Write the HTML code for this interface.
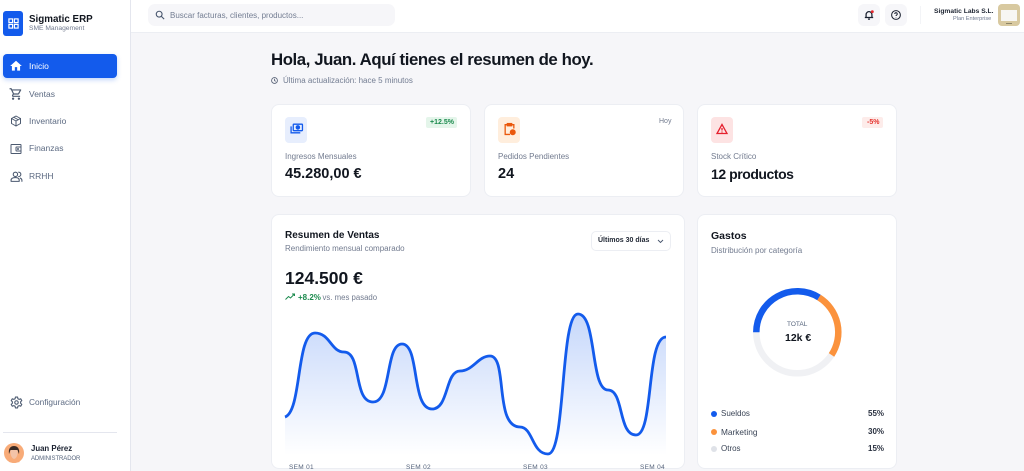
<!DOCTYPE html>
<html lang="es"><head><meta charset="utf-8"><title>Sigmatic ERP</title>
<style>
*{box-sizing:border-box;margin:0;padding:0}
html,body{width:1024px;height:471px;overflow:hidden;background:#f6f6f9;font-family:"Liberation Sans",sans-serif}
body{position:relative}
.t{position:absolute;white-space:nowrap;line-height:1}
.b{position:absolute}
.card{position:absolute;background:#fff;border:1px solid #eceef3;border-radius:8px}
svg{position:absolute;overflow:visible}
.ns{fill:none;stroke:#4c5a70;stroke-width:2;stroke-linecap:round;stroke-linejoin:round}
.nav{color:#5c6a82;font-size:8.5px}
.mut{color:#727b8f}
</style></head><body>
<!-- Sidebar -->
<div class="b" style="left:0;top:0;width:131px;height:471px;background:#fff;border-right:1px solid #e4e6ee"></div>
<div class="b" style="left:3px;top:11px;width:20px;height:25px;background:#135bec;border-radius:3px"></div>
<svg style="left:7.5px;top:18px" width="11" height="11" viewBox="0 0 12 12" fill="none" stroke="#fff" stroke-width="1.3"><rect x="1" y="1" width="4" height="4"/><rect x="7" y="1" width="4" height="4"/><rect x="1" y="7" width="4" height="4"/><rect x="7" y="7" width="4" height="4"/></svg>
<div class="t" style="left:29px;top:14.5px;font-size:9.8px;font-weight:700;color:#11161f">Sigmatic ERP</div>
<div class="t mut" style="left:29px;top:26px;font-size:6.7px">SME Management</div>

<div class="b" style="left:3px;top:54px;width:114px;height:24px;background:#135bec;border-radius:4px;box-shadow:0 2px 5px rgba(19,91,236,.25)"></div>
<svg style="left:9px;top:59px" width="14" height="14" viewBox="0 0 24 24" fill="#fff"><path d="M10 20v-6h4v6h5v-8h3L12 3 2 12h3v8z"/></svg>
<div class="t" style="left:29px;top:62px;font-size:8.5px;color:#fff">Inicio</div>

<svg style="left:9px;top:87px" width="14" height="14" viewBox="0 0 24 24" fill="#4c5a70"><path d="M15.55 13c.75 0 1.41-.41 1.75-1.03l3.58-6.49A.996.996 0 0 0 20.01 4H5.21l-.94-2H1v2h2l3.6 7.59-1.35 2.44C4.52 15.37 5.48 17 7 17h12v-2H7l1.1-2h7.45zM6.16 6h12.15l-2.76 5H8.53L6.16 6zM7 18c-1.1 0-1.99.9-1.99 2S5.9 22 7 22s2-.9 2-2-.9-2-2-2zm10 0c-1.1 0-1.99.9-1.99 2s.89 2 1.99 2 2-.9 2-2-.9-2-2-2z"/></svg>
<div class="t nav" style="left:29px;top:89.5px">Ventas</div>

<svg class="ns" style="left:10px;top:115px" width="12" height="12" viewBox="0 0 24 24"><path d="M12 2 3 7v10l9 5 9-5V7z"/><path d="M3 7l9 5 9-5M12 12v10M7.5 4.500l9 5"/></svg>
<div class="t nav" style="left:29px;top:117px">Inventario</div>

<svg class="ns" style="left:10px;top:143px" width="12" height="12" viewBox="0 0 24 24"><rect x="2" y="3" width="20" height="18" rx="1"/><rect x="12" y="8" width="10" height="8" rx="1"/><circle cx="16" cy="12" r="1"/></svg>
<div class="t nav" style="left:29px;top:144px">Finanzas</div>

<svg class="ns" style="left:10px;top:170px" width="13" height="13" viewBox="0 0 24 24"><circle cx="10" cy="8" r="4"/><path d="M2 21v-2c0-3 3-5 8-5s7 2 7 5v2z"/><path d="M16 4a4 4 0 0 1 0 8M19 15c2 1 3 2 3 4v2"/></svg>
<div class="t nav" style="left:29px;top:172px">RRHH</div>

<svg class="ns" style="left:10px;top:396px" width="13" height="13" viewBox="0 0 24 24"><circle cx="12" cy="12" r="3.2"/><path d="M10 2h4l.6 3 2.4 1.200 2.800-1 2 3.400-2.200 2 0 2.800 2.200 2-2 3.400-2.800-1L14.600 19 14 22h-4l-.6-3L7 17.800l-2.800 1-2-3.400 2.200-2v-2.800l-2.200-2 2-3.400 2.800 1L9.400 5z"/></svg>
<div class="t nav" style="left:29px;top:398px;font-size:8.3px">Configuración</div>

<div class="b" style="left:3px;top:432px;width:114px;height:1px;background:#e4e6ee"></div>
<svg style="left:4px;top:443px" width="20" height="20" viewBox="0 0 20 20"><circle cx="10" cy="10" r="10" fill="#f8ab78"/><path d="M5 11c-1-6 2-8 5-8s6 2 5 8c-1-2-1-4-2-4H7c-1 0-1 2-2 4z" fill="#3a2a24"/><path d="M6.500 7h7c.5 3 0 8-3.500 9-3-1-4-6-3.500-9z" fill="#f3c3a8"/><path d="M6 16c2 3 6 3 8 2l2 1-6 1-5-1z" fill="#f8ab78"/></svg>
<div class="t" style="left:31px;top:445px;font-size:7.8px;font-weight:700;color:#1a2130">Juan Pérez</div>
<div class="t" style="left:31px;top:455.5px;font-size:6px;color:#56647c;letter-spacing:-.08px">ADMINISTRADOR</div>

<!-- Topbar -->
<div class="b" style="left:131px;top:0;width:893px;height:33px;background:#fff;border-bottom:1px solid #eceef3"></div>
<div class="b" style="left:148px;top:4px;width:247px;height:22px;background:#f6f6f9;border-radius:7px"></div>
<svg style="left:155px;top:10px" width="10" height="10" viewBox="0 0 24 24" fill="none" stroke="#46546c" stroke-width="2.6"><circle cx="10" cy="10" r="7"/><path d="m15 15 7 7"/></svg>
<div class="t" style="left:170px;top:11.5px;font-size:8px;color:#737d92">Buscar facturas, clientes, productos...</div>

<div class="b" style="left:858px;top:4px;width:22px;height:22px;background:#f6f6f9;border-radius:6px"></div>
<div class="b" style="left:885px;top:4px;width:22px;height:22px;background:#f6f6f9;border-radius:6px"></div>
<svg style="left:864px;top:10px" width="10" height="10" viewBox="0 0 24 24" fill="none" stroke="#1a2130" stroke-width="3"><path d="M5 18V11a7 7 0 0 1 14 0v7M2 18h20M9.500 22h5"/><circle cx="20" cy="4" r="3.500" fill="#e5262e" stroke="none"/></svg>
<svg style="left:891px;top:10px" width="10" height="10" viewBox="0 0 24 24" fill="none" stroke="#1a2130" stroke-width="2.500"><circle cx="12" cy="12" r="10.500"/><path d="M9 9.500a3 3 0 1 1 4.500 2.600c-1 .6-1.500 1.200-1.500 2.400M12 17v1"/></svg>
<div class="b" style="left:920px;top:6px;width:1px;height:18px;background:#f3f4f7"></div>
<div class="t" style="left:934px;top:8.5px;font-size:6.7px;font-weight:700;color:#222936">Sigmatic Labs S.L.</div>
<div class="t" style="left:953px;top:16.5px;font-size:5.6px;color:#6f7a90">Plan Enterprise</div>
<div class="b" style="left:998px;top:4px;width:22px;height:22px;background:#d8c9a0;border-radius:4px"></div>
<div class="b" style="left:1001px;top:10px;width:16px;height:11px;background:#f7f6f3"></div>
<div class="b" style="left:1006px;top:23px;width:6px;height:1px;background:#8d8468"></div>

<!-- Heading -->
<div class="t" style="left:271px;top:52px;font-size:16.8px;font-weight:700;color:#11161f;letter-spacing:-.41px">Hola, Juan. Aquí tienes el resumen de hoy.</div>
<svg style="left:271px;top:76.5px" width="7" height="7" viewBox="0 0 24 24" fill="none" stroke="#5a6478" stroke-width="3"><circle cx="12" cy="12" r="10"/><path d="M12 6v6l4 3"/></svg>
<div class="t" style="left:283px;top:76.5px;font-size:8px;color:#737d92">Última actualización: hace 5 minutos</div>

<!-- KPI cards -->
<div class="card" style="left:271px;top:104px;width:200px;height:93px"></div>
<div class="card" style="left:484px;top:104px;width:200px;height:93px"></div>
<div class="card" style="left:697px;top:104px;width:200px;height:93px"></div>

<div class="b" style="left:285px;top:117px;width:22px;height:26px;background:#e7eefd;border-radius:4px"></div>
<svg style="left:289.5px;top:122px" width="13" height="13" viewBox="0 0 24 24" fill="none" stroke="#135bec" stroke-width="2.4"><rect x="6" y="4" width="17" height="12" rx="1"/><circle cx="14.5" cy="10" r="3" fill="#135bec"/><path d="M2 8v12h17"/></svg>
<div class="b" style="left:426px;top:117px;width:31px;height:11px;background:#e4f5ea;border-radius:2px"></div>
<div class="t" style="left:430px;top:119px;font-size:7px;font-weight:700;color:#1b8a4d">+12.5%</div>
<div class="t mut" style="left:285px;top:153px;font-size:8px">Ingresos Mensuales</div>
<div class="t" style="left:285px;top:167px;font-size:14.5px;font-weight:700;color:#11161f">45.280,00 €</div>

<div class="b" style="left:498px;top:117px;width:22px;height:26px;background:#ffeedd;border-radius:4px"></div>
<svg style="left:503px;top:122px" width="13" height="14" viewBox="0 0 24 24" fill="none" stroke="#ea580c" stroke-width="2.4"><path d="M8 4H4v18h9M16 4h4v7"/><rect x="8" y="2" width="8" height="4" fill="#ea580c"/><circle cx="18" cy="18" r="5.5" fill="#ea580c" stroke="none"/></svg>
<div class="t" style="left:659px;top:118px;font-size:7px;color:#727b8f">Hoy</div>
<div class="t mut" style="left:498px;top:153px;font-size:8px">Pedidos Pendientes</div>
<div class="t" style="left:498px;top:167px;font-size:14.5px;font-weight:700;color:#11161f">24</div>

<div class="b" style="left:711px;top:117px;width:22px;height:26px;background:#fde3e3;border-radius:4px"></div>
<svg style="left:716px;top:122.5px" width="12" height="12" viewBox="0 0 24 24" fill="none" stroke="#e5202e" stroke-width="2.6"><path d="M12 3 2 21h20z"/><path d="M12 10v5M12 17v2"/></svg>
<div class="b" style="left:862px;top:117px;width:21px;height:11px;background:#fdecea;border-radius:2px"></div>
<div class="t" style="left:867px;top:119px;font-size:7px;font-weight:700;color:#e5332e">-5%</div>
<div class="t mut" style="left:711px;top:153px;font-size:8px">Stock Crítico</div>
<div class="t" style="left:711px;top:167px;font-size:14px;font-weight:700;color:#11161f;letter-spacing:-.45px">12 productos</div>

<!-- Chart card -->
<div class="card" style="left:271px;top:214px;width:414px;height:255px"></div>
<div class="t" style="left:285px;top:230.5px;font-size:10px;font-weight:700;color:#11161f">Resumen de Ventas</div>
<div class="t mut" style="left:285px;top:245px;font-size:8px">Rendimiento mensual comparado</div>
<div class="t" style="left:285px;top:269.5px;font-size:17.5px;font-weight:700;color:#11161f">124.500 €</div>
<svg style="left:285px;top:293px" width="10" height="8" viewBox="0 0 20 16" fill="none" stroke="#1b8a4d" stroke-width="2"><path d="M1 13l6-6 4 3 7-7M14 2h5v4"/></svg>
<div class="t" style="left:298px;top:293.5px;font-size:8px;font-weight:700;color:#1b8a4d">+8.2%</div>
<div class="t mut" style="left:322.5px;top:293.5px;font-size:7.8px">vs. mes pasado</div>

<div class="b" style="left:591px;top:231px;width:80px;height:20px;background:#fff;border:1px solid #eceef3;border-radius:5px"></div>
<div class="t" style="left:598px;top:237px;font-size:7px;font-weight:700;color:#222936">Últimos 30 días</div>
<svg style="left:657px;top:238.5px" width="7" height="5" viewBox="0 0 14 10" fill="none" stroke="#46546c" stroke-width="1.8"><path d="M2 2l5 5 5-5"/></svg>

<svg style="left:0;top:0" width="1024" height="471" viewBox="0 0 1024 471">
<defs><linearGradient id="g" x1="0" y1="314" x2="0" y2="455" gradientUnits="userSpaceOnUse"><stop offset="0" stop-color="#135bec" stop-opacity=".24"/><stop offset="1" stop-color="#135bec" stop-opacity="0"/></linearGradient></defs>
<path d="M285 417C302 411 296 333 315 333C330 333 331 352 344 352C362 352 353 402 373 402C392 402 385 344 402 344C420 344 411 409 432 409C449 409 445 371 460 371C473 371 478 356 490 356C508 356 494 427 520 427C533 427 532 454 548 454C566 454 560 314 578 314C597 314 590 390 608 390C624 390 618 435 636 435C654 435 646 337 666 337V455H285Z" fill="url(#g)"/>
<path d="M285 417C302 411 296 333 315 333C330 333 331 352 344 352C362 352 353 402 373 402C392 402 385 344 402 344C420 344 411 409 432 409C449 409 445 371 460 371C473 371 478 356 490 356C508 356 494 427 520 427C533 427 532 454 548 454C566 454 560 314 578 314C597 314 590 390 608 390C624 390 618 435 636 435C654 435 646 337 666 337" fill="none" stroke="#135bec" stroke-width="2.8"/>
</svg>
<div class="t" style="left:289px;top:465px;font-size:6.5px;color:#56647c;letter-spacing:.3px">SEM 01</div>
<div class="t" style="left:406px;top:465px;font-size:6.5px;color:#56647c;letter-spacing:.3px">SEM 02</div>
<div class="t" style="left:523px;top:465px;font-size:6.5px;color:#56647c;letter-spacing:.3px">SEM 03</div>
<div class="t" style="left:640px;top:465px;font-size:6.5px;color:#56647c;letter-spacing:.3px">SEM 04</div>

<!-- Gastos -->
<div class="card" style="left:697px;top:214px;width:200px;height:255px"></div>
<div class="t" style="left:711px;top:230.5px;font-size:10.5px;font-weight:700;color:#11161f">Gastos</div>
<div class="t mut" style="left:711px;top:247px;font-size:8px">Distribución por categoría</div>
<svg style="left:0;top:0" width="1024" height="471" viewBox="0 0 1024 471" fill="none" stroke-width="6.5">
<circle cx="797.3" cy="332.3" r="41" stroke="#f0f1f4"/>
<path d="M756.3 332.3A41 41 0 0 1 819 297.5" stroke="#135bec"/>
<path d="M819 297.5A41 41 0 0 1 831.5 354.9" stroke="#fb923c"/>
</svg>
<div class="t" style="left:787px;top:321.5px;font-size:6.5px;color:#56647c">TOTAL</div>
<div class="t" style="left:785px;top:333px;font-size:10.5px;font-weight:700;color:#11161f">12k €</div>

<div class="b" style="left:711px;top:411px;width:6px;height:6px;border-radius:50%;background:#135bec"></div>
<div class="t" style="left:721px;top:410px;font-size:8px;color:#3a4456">Sueldos</div>
<div class="t" style="left:868px;top:410px;font-size:8px;font-weight:700;color:#2a3140">55%</div>
<div class="b" style="left:711px;top:429px;width:6px;height:6px;border-radius:50%;background:#fb923c"></div>
<div class="t" style="left:721px;top:428px;font-size:8.3px;color:#3a4456">Marketing</div>
<div class="t" style="left:868px;top:428px;font-size:8px;font-weight:700;color:#2a3140">30%</div>
<div class="b" style="left:711px;top:446px;width:6px;height:6px;border-radius:50%;background:#dfe2e8"></div>
<div class="t" style="left:721px;top:445px;font-size:8px;color:#3a4456">Otros</div>
<div class="t" style="left:868px;top:445px;font-size:8px;font-weight:700;color:#2a3140">15%</div>
</body></html>
